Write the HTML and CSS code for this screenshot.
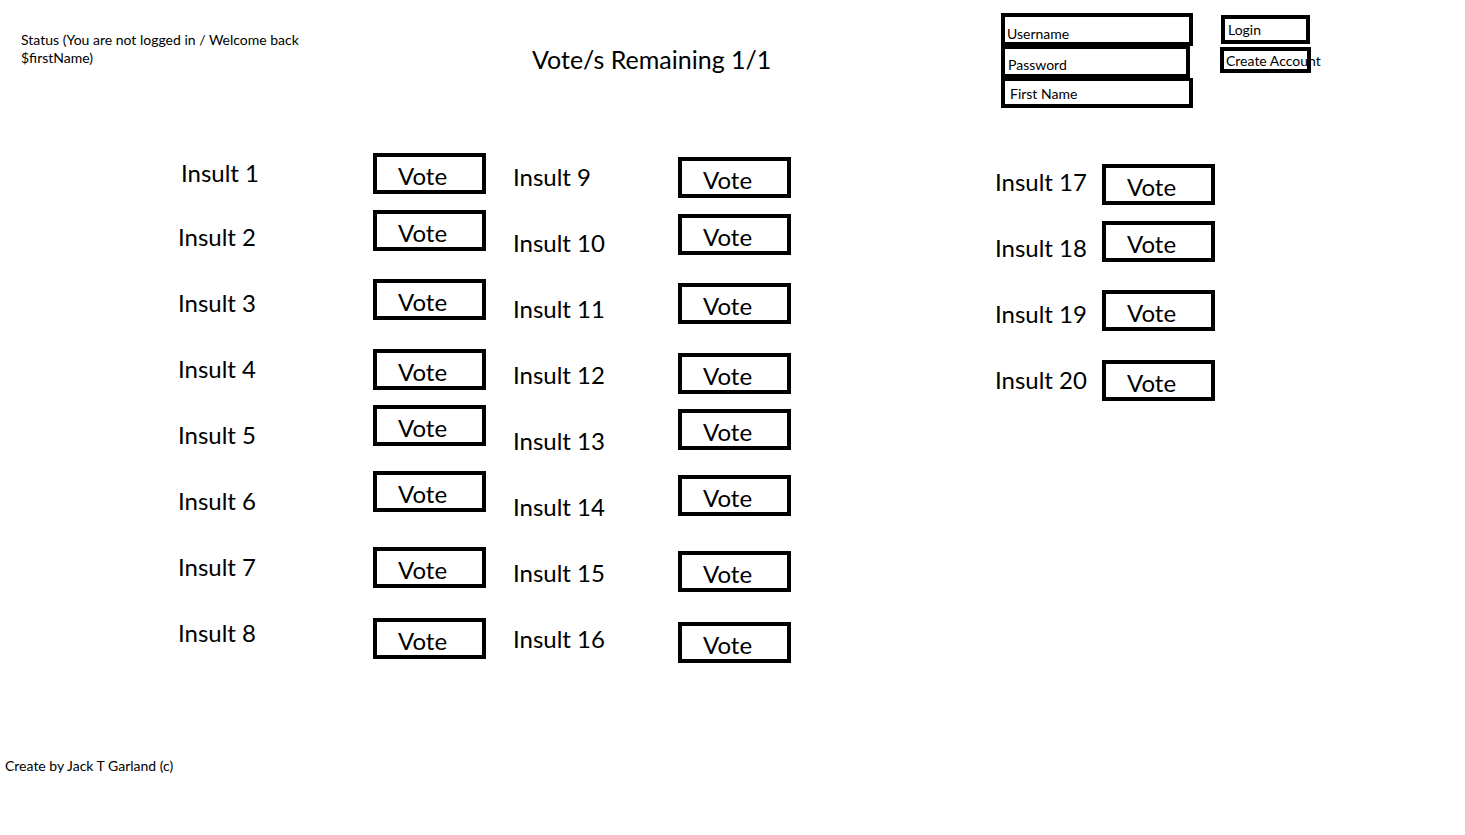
FILE: index.html
```html
<!DOCTYPE html>
<html lang="en">
<head>
  <meta charset="UTF-8">
  <meta name="viewport" content="width=device-width, initial-scale=1.0">
  <title>Insult Vote</title>
  <link rel="stylesheet" href="styles.css">
</head>
<body>
<div class="page">
  <header class="topbar">
    <p class="status">Status (You are not logged in / Welcome back<br>$firstName)</p>
    <h1 class="votes-left">Vote/s Remaining 1/1</h1>

    <form class="auth">
      <div class="auth-fields">
        <div class="field field-user">Username</div>
        <div class="field field-pass">Password</div>
        <div class="field field-name">First Name</div>
      </div>
      <div class="auth-actions">
        <div class="btn-small btn-login">Login</div>
        <div class="btn-small btn-create">Create Account</div>
      </div>
    </form>
  </header>

  <main class="board">
    <div class="column col-1">
      <div class="row"><span class="label">Insult 1</span><span class="vote">Vote</span></div>
      <div class="row"><span class="label">Insult 2</span><span class="vote">Vote</span></div>
      <div class="row"><span class="label">Insult 3</span><span class="vote">Vote</span></div>
      <div class="row"><span class="label">Insult 4</span><span class="vote">Vote</span></div>
      <div class="row"><span class="label">Insult 5</span><span class="vote">Vote</span></div>
      <div class="row"><span class="label">Insult 6</span><span class="vote">Vote</span></div>
      <div class="row"><span class="label">Insult 7</span><span class="vote">Vote</span></div>
      <div class="row"><span class="label">Insult 8</span><span class="vote">Vote</span></div>
    </div>

    <div class="column col-2">
      <div class="row"><span class="label">Insult 9</span><span class="vote">Vote</span></div>
      <div class="row"><span class="label">Insult 10</span><span class="vote">Vote</span></div>
      <div class="row"><span class="label">Insult 11</span><span class="vote">Vote</span></div>
      <div class="row"><span class="label">Insult 12</span><span class="vote">Vote</span></div>
      <div class="row"><span class="label">Insult 13</span><span class="vote">Vote</span></div>
      <div class="row"><span class="label">Insult 14</span><span class="vote">Vote</span></div>
      <div class="row"><span class="label">Insult 15</span><span class="vote">Vote</span></div>
      <div class="row"><span class="label">Insult 16</span><span class="vote">Vote</span></div>
    </div>

    <div class="column col-3">
      <div class="row"><span class="label">Insult 17</span><span class="vote">Vote</span></div>
      <div class="row"><span class="label">Insult 18</span><span class="vote">Vote</span></div>
      <div class="row"><span class="label">Insult 19</span><span class="vote">Vote</span></div>
      <div class="row"><span class="label">Insult 20</span><span class="vote">Vote</span></div>
    </div>
  </main>

  <footer class="credits">
    <p>Create by Jack T Garland (c)</p>
  </footer>
</div>
</body>
</html>
```

FILE: styles.css
```css
:root {
    --ink: #000;
    --paper: #fff;
    --line: 4px solid #000;
}

* {
    box-sizing: border-box;
    margin: 0;
    padding: 0;
}

body {
    font-family: Lato, "Open Sans", sans-serif;
    color: var(--ink);
    background-color: var(--paper);
}

.page {
    width: 1465px;
    min-height: 835px;
}

/* header */

.topbar {
    display: flex;
    align-items: flex-start;
    height: 110px;
}

.status {
    flex: none;
    width: 290px;
    margin: 31px 0 0 21px;
    font-size: 14px;
    line-height: 18px;
}

.votes-left {
    flex: none;
    margin: 44px 0 0 221px;
    font-size: 25px;
    font-weight: normal;
    line-height: 30px;
}

.auth {
    display: flex;
    align-items: flex-start;
    margin: 13px 154px 0 auto;
    font-size: 14px;
}

.auth-fields {
    display: flex;
    flex-direction: column;
    width: 192px;
}

.field {
    width: 192px;
    border: var(--line);
    line-height: 16px;
    padding-left: 2px;
}

.field-user {
    height: 33px;
    padding-top: 9px;
}

.field-pass {
    width: 189px;
    height: 32px;
    border-top-width: 3px;
    padding: 8px 0 0 3px;
}

.field-name {
    height: 30px;
    border-top-width: 3px;
    padding: 5px 0 0 5px;
}

.auth-actions {
    display: flex;
    flex-direction: column;
    margin: 2px 0 0 28px;
}

.btn-small {
    border: var(--line);
    line-height: 16px;
    white-space: nowrap;
}

.btn-login {
    width: 89px;
    height: 29px;
    padding: 3px 0 0 3px;
}

.btn-create {
    width: 91px;
    height: 26px;
    margin: 3px 0 0 -1px;
    padding: 2px 0 0 2px;
}

/* insult list */

.board {
    display: flex;
    align-items: flex-start;
    height: 647px;
}

.column {
    flex: none;
}

.col-1 {
    margin-left: 178px;
    padding-top: 46px;
}

.col-2 {
    margin-left: 27px;
    padding-top: 50px;
}

.col-3 {
    margin-left: 204px;
    padding-top: 57px;
}

.row {
    display: flex;
    align-items: flex-start;
    height: 66px;
}

.label {
    font-size: 24px;
    line-height: 30px;
}

.col-1 .label { width: 195px; }
.col-2 .label { width: 165px; margin-top: 2px; }
.col-3 .label { width: 107px; }

.col-1 .row:first-child .label {
    margin-top: 2px;
    padding-left: 3px;
}

.vote {
    width: 113px;
    height: 41px;
    border: var(--line);
    padding: 3px 0 0 21px;
    font-size: 24px;
    line-height: 31px;
}

/* the boxes were drawn by hand, so they sit a little off the labels */
.row:nth-child(1) .vote { margin-top: -3px; }
.row:nth-child(2) .vote { margin-top: -12px; }
.row:nth-child(3) .vote { margin-top: -9px; }
.row:nth-child(4) .vote { margin-top: -5px; }
.row:nth-child(5) .vote { margin-top: -15px; }
.row:nth-child(6) .vote { margin-top: -15px; }
.row:nth-child(7) .vote { margin-top: -5px; }
.row:nth-child(8) .vote { margin-top: 0; }

/* footer */

.credits {
    padding-left: 5px;
    font-size: 14px;
    line-height: 18px;
}
```
